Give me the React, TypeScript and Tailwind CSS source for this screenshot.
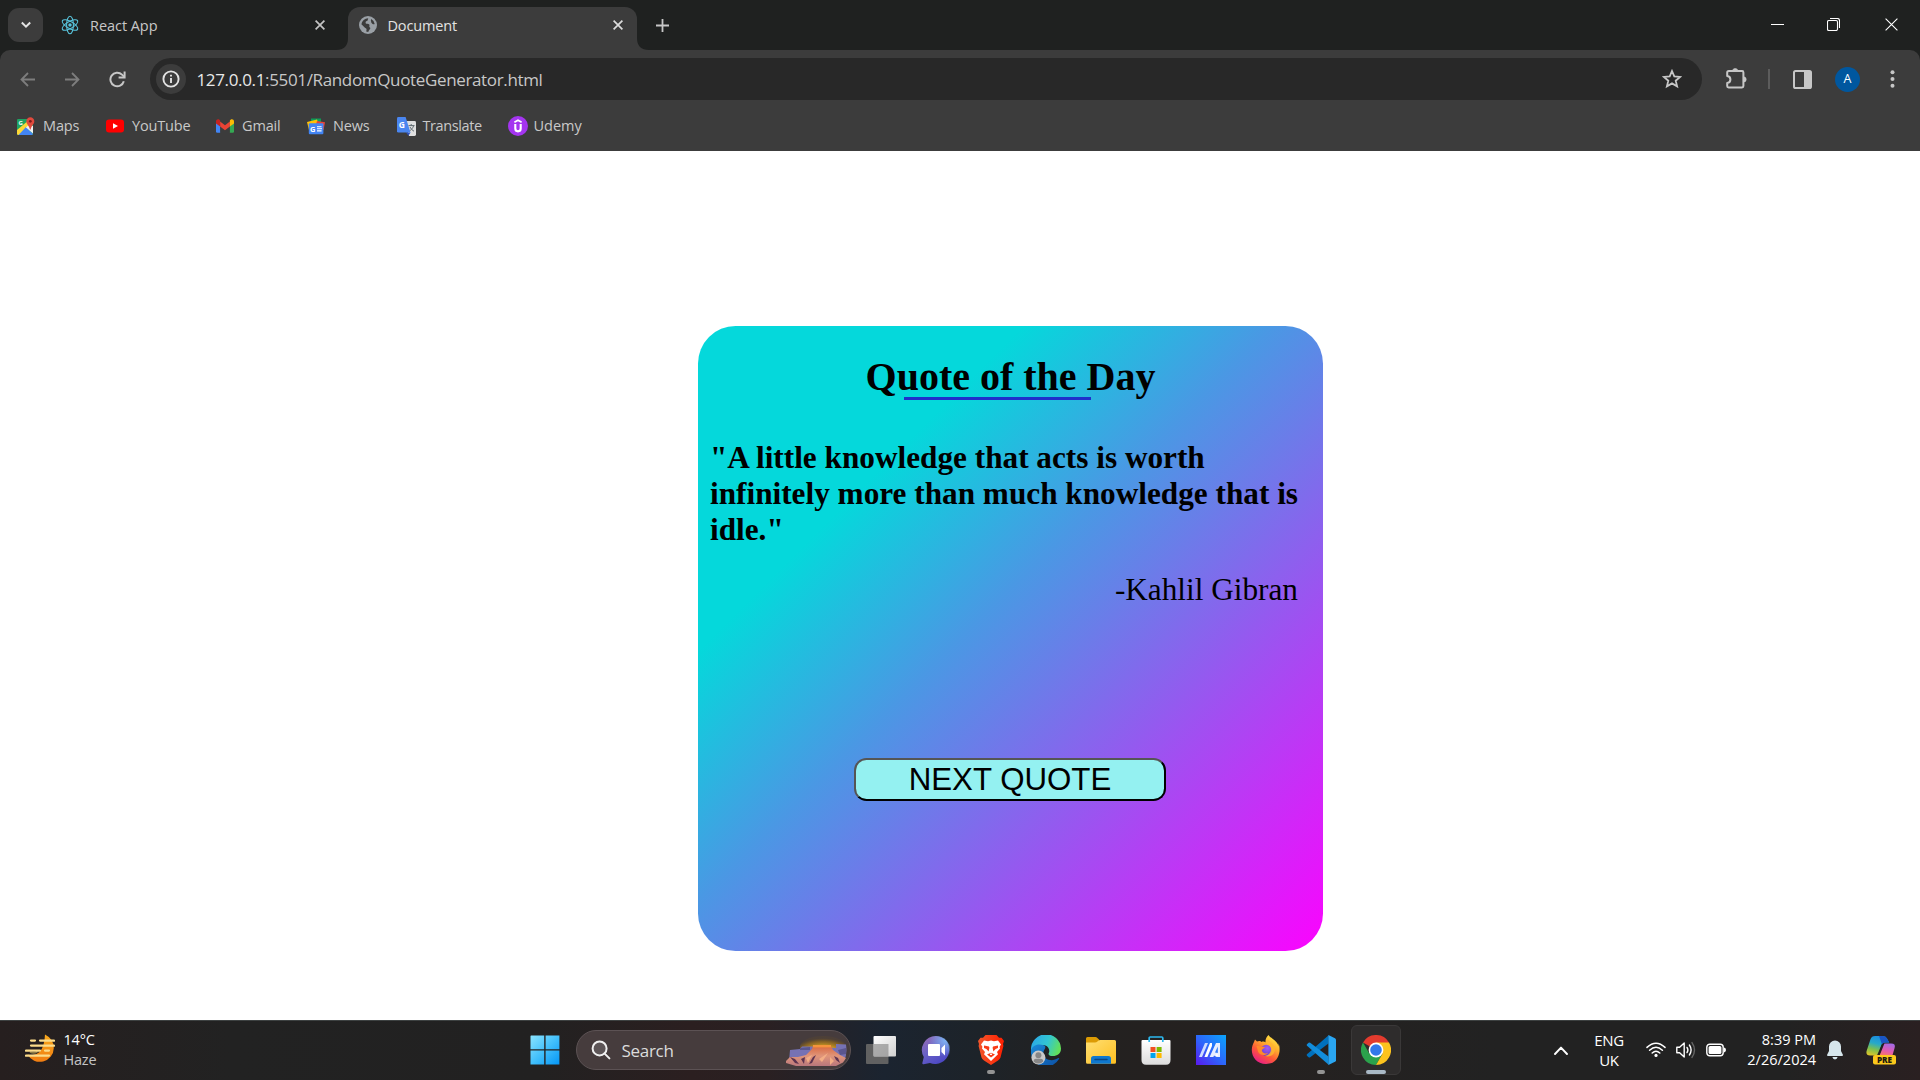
import type { ReactNode } from "react";

/* ---------- browser icons ---------- */

const ReactLogo = () => (
  <svg width="20" height="20" viewBox="-12 -12 24 24" fill="none" stroke="#58c4dc" strokeWidth="1.3">
    <circle r="2.1" fill="#58c4dc" stroke="none" />
    <ellipse rx="10.5" ry="4.1" transform="rotate(30)" />
    <ellipse rx="10.5" ry="4.1" transform="rotate(90)" />
    <ellipse rx="10.5" ry="4.1" transform="rotate(150)" />
  </svg>
);

const Globe = () => (
  <svg width="18" height="18" viewBox="0 0 18 18">
    <circle cx="9" cy="9" r="9" fill="#9aa0a6" />
    <path d="M9.3 2.2 C8.3 3.2 9.6 4.2 8.2 4.8 C6.6 5.3 6.5 6.2 6.7 7.2 C7 8.2 9.6 7.4 10.3 8.6 C10.9 9.8 9.8 10.4 10.6 11.2 C11.6 11.6 11.6 12.6 10.6 13.4 C9.8 14.2 9.6 15.2 9.2 15.9 A6.9 6.9 0 0 1 7.2 15.6 L7.6 13.6 C7.8 12.4 6 12.2 5.2 11 L2.4 8.3 A6.8 6.8 0 0 1 9.3 2.2 Z M12.2 3 A6.9 6.9 0 0 1 15.7 8 C14.6 8.6 13.4 8 12.6 7 C11.8 6 12.4 5.4 11.8 4.6 Z" fill="#3c3c3c" />
  </svg>
);

const Cross = ({ size, width = 1.7, color = "#dcdcdc" }: { size: number; width?: number; color?: string }) => (
  <svg width={size} height={size} viewBox={`0 0 ${size} ${size}`} stroke={color} strokeWidth={width}>
    <path d={`M.6 .6 L${size - 0.6} ${size - 0.6} M${size - 0.6} .6 L.6 ${size - 0.6}`} />
  </svg>
);

const MapsIcon = () => (
  <svg width="18" height="18" viewBox="0 0 18 18">
    <rect x="0" y="2" width="16" height="16" rx="1.5" fill="#1fa463" />
    <path d="M0 13 L0 16.5 Q0 18 1.5 18 L3 18 L14 7 L12 3 Z" fill="#fdd835" />
    <path d="M1.5 18 L9 10 L16 17 L15 18 Z" fill="#4285f4" />
    <path d="M9 10.5 L12 7.5 L16 9 L16 16.5 Z" fill="#f1f1f1" />
    <path d="M0 12 V3.5 Q0 2 1.5 2 H11 Z" fill="#1fa463" />
    <text x="1.4" y="8" fontSize="6" fontWeight="700" fill="#fff" fontFamily="Open Sans, sans-serif">G</text>
    <path d="M13.3 .3 A4 4 0 0 1 17.3 4.4 C17.3 7 14.4 8.3 13.6 12.5 H13 C12.2 8.3 9.3 7 9.3 4.4 A4 4 0 0 1 13.3 .3 Z" fill="#e14a3d" />
    <circle cx="13.3" cy="4.3" r="1.4" fill="#7d1d1b" />
  </svg>
);

const YouTubeIcon = () => (
  <svg width="18" height="18" viewBox="0 0 18 18">
    <rect x="0" y="2.6" width="18" height="12.8" rx="3" fill="#f00" />
    <path d="M7 6.2 L12 9 L7 11.8 Z" fill="#fff" />
  </svg>
);

const GmailIcon = () => (
  <svg width="18" height="18" viewBox="0 0 18 18">
    <path d="M0 5 V14.6 Q0 15.8 1.2 15.8 H4.1 V8.6 Z" fill="#4285f4" />
    <path d="M18 5 V14.6 Q18 15.8 16.8 15.8 H13.9 V8.6 Z" fill="#34a853" />
    <path d="M4.1 4.6 L9 8.3 L13.9 4.6 V9.6 L9 13.3 L4.1 9.6 Z" fill="#ea4335" />
    <path d="M0 4.4 C0 2.4 2.1 1.8 3.4 2.8 L4.1 3.3 V9.6 L0 6.5 Z" fill="#c5221f" />
    <path d="M18 4.4 C18 2.4 15.9 1.8 14.6 2.8 L13.9 3.3 V9.6 L18 6.5 Z" fill="#fbbc04" />
  </svg>
);

const NewsIcon = () => (
  <svg width="18" height="18" viewBox="0 0 18 18">
    <path d="M4 1.5 H14 V8 H4 Z" fill="#0c9d58" />
    <path d="M0 5 L10 2.4 L12.5 9 L2 13 Z" fill="#ffc107" />
    <path d="M10 4 L18 5.2 L16.6 13 L8 11 Z" fill="#ea4335" />
    <rect x="1.8" y="6.2" width="14.6" height="11" rx="1" fill="#4285f4" />
    <text x="3" y="14.6" fontSize="7.5" fontWeight="700" fill="#fff" fontFamily="Open Sans, sans-serif">G</text>
    <path d="M10 9.7 H14.6 M10 11.8 H15 M10 13.9 H14.6" stroke="#fff" strokeWidth="1.1" />
  </svg>
);

const TranslateIcon = () => (
  <svg width="19" height="19" viewBox="0 0 19 19">
    <path d="M8 4 H17.6 Q19 4 19 5.4 V17.6 Q19 19 17.6 19 H12 Z" fill="#dfdfdf" />
    <path d="M11.5 8.6 H17.5 M14.2 7 V8.6 M16.6 8.8 C16 11 14 13 12.4 14 M13 10 C14 12 15.6 13.4 17 14.2" stroke="#5f6a70" strokeWidth="1" fill="none" />
    <path d="M9 15.5 H13.5 L11.5 18.8 Z" fill="#3050b8" />
    <path d="M1.4 0 H8.6 L13.5 15.6 H1.4 Q0 15.6 0 14.2 V1.4 Q0 0 1.4 0 Z" fill="#4a86f0" />
    <text x="1.8" y="10.6" fontSize="8.5" fontWeight="700" fill="#fff" fontFamily="Open Sans, sans-serif">G</text>
  </svg>
);

const UdemyIcon = () => (
  <svg width="20" height="20" viewBox="0 0 20 20" fill="none" stroke="#fff">
    <circle cx="10" cy="10" r="10" fill="#a435f0" stroke="none" />
    <path d="M6.4 6.2 L10 4.2 L13.6 6.2" strokeWidth="1.7" />
    <path d="M7.3 8 V12.6 Q7.3 15.4 10 15.4 Q12.7 15.4 12.7 12.6 V8" strokeWidth="2.1" />
  </svg>
);

/* ---------- taskbar icons ---------- */

const Haze = () => (
  <svg width="30" height="30" viewBox="0 0 30 30">
    <defs>
      <linearGradient id="hz" x1="0" y1="0" x2="0" y2="1">
        <stop offset="0" stopColor="#f8a91c" />
        <stop offset="1" stopColor="#f07d12" />
      </linearGradient>
    </defs>
    <path d="M20 .5 Q28.8 5 28.8 14 A14 14 0 0 1 2.5 20.5 Q9 23 14.5 18 Q19.5 13 20 .5 Z" fill="url(#hz)" />
    <path d="M5 18 Q9 20 12.5 17.5" stroke="#8d7b45" strokeWidth="1.6" fill="none" />
    <g stroke="#fbdc8b" strokeWidth="2.2" strokeLinecap="round">
      <path d="M6 6.6 H10 M15 6.6 H29" />
      <path d="M6 11.6 H29" />
      <path d="M1 16.6 H15 M20 16.6 H24" />
      <path d="M1 21.6 H24" />
    </g>
  </svg>
);

const Windows = () => (
  <svg width="30" height="30" viewBox="0 0 30 30">
    <defs>
      <linearGradient id="wn" x1="0" y1="0" x2="1" y2="1">
        <stop offset="0" stopColor="#8be4ff" />
        <stop offset=".5" stopColor="#43c0fb" />
        <stop offset="1" stopColor="#0596f5" />
      </linearGradient>
    </defs>
    <path d="M1 .6 H14.2 V14.2 H.5 V1 Z M15.6 .5 H29.4 V14.2 H15.6 Z M.5 15.6 H14.2 V29.4 H.5 Z M15.6 15.6 H29.4 V29.4 H15.6 Z" fill="url(#wn)" />
  </svg>
);

const Canyon = () => (
  <svg width="61" height="32" viewBox="0 0 61 32">
    <defs>
      <radialGradient id="sun" cx=".5" cy=".75" r=".65">
        <stop offset="0" stopColor="#ffd34d" />
        <stop offset=".45" stopColor="#d09a20" />
        <stop offset=".8" stopColor="#8a6420" stopOpacity=".8" />
        <stop offset="1" stopColor="#6b5020" stopOpacity=".2" />
      </radialGradient>
      <linearGradient id="rk" x1="0" y1="0" x2="0" y2="1">
        <stop offset="0" stopColor="#d9693f" />
        <stop offset=".5" stopColor="#e0957a" />
        <stop offset="1" stopColor="#b9777c" />
      </linearGradient>
    </defs>
    <ellipse cx="37" cy="12" rx="23" ry="11" fill="url(#sun)" />
    <path d="M3 26 L4 15 L14 14 L16 11.5 H26 L30 12 L50 13 V9 L60 9.5 Q61.5 20 58 26 Z" fill="#7672b4" />
    <path d="M14 13 L24 12 V15 H14 Z M52 15 L60 13 V19 L54 20 Z" fill="#5a568f" />
    <path d="M0 26 L4 22 L12 22 L20 20 L26 14 L27 11 H45 L47 15 L54 20 L60 23 L57 27.5 L50 31 H10 L0 28 Z" fill="url(#rk)" />
    <path d="M27 10 H45 V12.4 H27 Z" fill="#f5943c" />
    <path d="M4 22 L9 24 L13 29 L9 28 Z M15 24 L19 22 L18 29 Z M27 22 L30 20 L26 28 L23 29 Z M48 21 L52 23 L54 28 L50 25 Z" fill="#5d3350" />
    <path d="M20 23 L26 20 L22 28 Z M33 24 L42 18 L36 27 Z M44 22 L48 26 L44 30 Z" fill="#f3ad85" />
  </svg>
);

const TaskView = () => (
  <svg width="30" height="30" viewBox="0 0 30 30">
    <defs>
      <linearGradient id="tv" x1="0" y1="0" x2="1" y2="1">
        <stop offset="0" stopColor="#fff" />
        <stop offset="1" stopColor="#cfcfcf" />
      </linearGradient>
    </defs>
    <rect x="0" y="9" width="22.5" height="20" rx="1" fill="#616161" />
    <rect x="7.5" y="1" width="22.5" height="20.5" rx="1" fill="url(#tv)" />
    <path d="M7.5 9 H22.5 V21.5 H7.5 Z" fill="#8e8e8e" fillOpacity=".7" />
  </svg>
);

const Chat = () => (
  <svg width="30" height="30" viewBox="0 0 30 30">
    <defs>
      <linearGradient id="ch" x1="0" y1="0" x2=".6" y2="1">
        <stop offset="0" stopColor="#9a6bb0" />
        <stop offset=".5" stopColor="#6c63c6" />
        <stop offset="1" stopColor="#4c48c4" />
      </linearGradient>
      <radialGradient id="ch2" cx=".85" cy=".15" r=".6">
        <stop offset="0" stopColor="#7fb4f4" />
        <stop offset="1" stopColor="#7fb4f4" stopOpacity="0" />
      </radialGradient>
    </defs>
    <path d="M15 1 A14 14 0 1 1 9 28 L2.6 29.2 Q1 29.4 1.4 27.8 L2.8 22 A14 14 0 0 1 15 1 Z" fill="url(#ch)" />
    <circle cx="15" cy="15" r="14" fill="url(#ch2)" />
    <rect x="7" y="9" width="12" height="12" rx="1" fill="#fff" />
    <path d="M20.5 13 L24 9.6 V20.4 L20.5 17 Z" fill="#fff" />
  </svg>
);

const Brave = () => (
  <svg width="30" height="30" viewBox="0 0 30 30">
    <defs>
      <linearGradient id="br" x1="0" y1="0" x2="1" y2="0">
        <stop offset="0" stopColor="#f1562b" />
        <stop offset="1" stopColor="#ff1f00" />
      </linearGradient>
    </defs>
    <path d="M9.5 0 H20.5 L23 2.8 L25.5 2.8 L28 6 L27 9 L27.4 11 L24.5 22.5 Q24 24 22 25.4 L15 30 L8 25.4 Q6 24 5.5 22.5 L2.6 11 L3 9 L2 6 L4.5 2.8 L7 2.8 Z" fill="url(#br)" />
    <path d="M8 5.4 L12 6.2 L15 5.4 L18 6.2 L22 5.4 L25 9.6 L23.6 11.8 L24 13.4 L21 17 L22 19.2 L15 26 L8 19.2 L9 17 L6 13.4 L6.4 11.8 L5 9.6 Z" fill="#fff" />
    <path d="M8 10.6 L13 11.4 L13.4 12.8 L12.6 16.6 L10.4 14 L8 13 Z M22 10.6 L17 11.4 L16.6 12.8 L17.4 16.6 L19.6 14 L22 13 Z M11 19.6 L15 17.8 L19 19.6 L15 22.4 Z" fill="#f83c18" />
    <path d="M14 18 L15 19.2 L16 18 V20 H14 Z" fill="#fff" />
  </svg>
);

const Edge = () => (
  <svg width="30" height="30" viewBox="0 0 30 30">
    <defs>
      <linearGradient id="e1" x1="0" y1=".2" x2="1" y2=".5">
        <stop offset="0" stopColor="#2aa5e8" />
        <stop offset=".55" stopColor="#32c6d2" />
        <stop offset="1" stopColor="#62e05a" />
      </linearGradient>
      <linearGradient id="e2" x1="0" y1="0" x2="1" y2="1">
        <stop offset="0" stopColor="#1a8ad8" />
        <stop offset="1" stopColor="#0c4fa3" />
      </linearGradient>
    </defs>
    <path d="M0 15 A15 15 0 0 1 30 13.5 C30 19 26 21 22 21 C18 21 17 19.4 17.8 18 C19.4 14.8 17 10 11.5 10 C5 10 1 13 0 17 Z" fill="url(#e1)" />
    <path d="M0 15 C2 9.5 8 8.6 12 10 C17 12 12.5 14 12.2 18 C12 23 17 25.4 21 25.2 C24 25 26 23.6 27.6 23 Q28.6 22.6 28 24 A15 15 0 0 1 0 15 Z" fill="url(#e2)" />
    <circle cx="7.4" cy="22.6" r="7" fill="#c9c9c9" />
    <circle cx="7.4" cy="20.2" r="3" fill="#868686" />
    <path d="M2.6 26.4 Q2.6 23.8 5 23.8 H9.8 Q12.2 23.8 12.2 26.4 Q10 28.6 7.4 28.6 Q4.8 28.6 2.6 26.4 Z" fill="#868686" />
  </svg>
);

const Folder = () => (
  <svg width="30" height="30" viewBox="0 0 30 30">
    <defs>
      <linearGradient id="fd" x1="0" y1="0" x2="1" y2="1">
        <stop offset="0" stopColor="#ffdf73" />
        <stop offset="1" stopColor="#fdbf20" />
      </linearGradient>
    </defs>
    <path d="M0 3.5 Q0 2 1.5 2 H9.5 Q10.5 2 11.4 3 L13.5 5 V9 H0 Z" fill="#dc9b04" />
    <path d="M0 7.5 H9 Q10.4 7.5 11.4 6.5 L12.6 5.6 Q13.2 5 14.2 5 H28.5 Q30 5 30 6.5 V27.2 Q30 28.8 28.5 28.8 H1.5 Q0 28.8 0 27.2 Z" fill="url(#fd)" />
    <path d="M5 28.8 V23.6 Q5 21 7.6 21 H22.4 Q25 21 25 23.6 V28.8 Z" fill="#0f78cf" />
    <path d="M9 24.5 H21" stroke="#0a4684" strokeWidth="1.5" strokeLinecap="round" />
  </svg>
);

const Store = () => (
  <svg width="30" height="30" viewBox="0 0 30 30">
    <defs>
      <linearGradient id="st" x1="0" y1="0" x2="0" y2="1">
        <stop offset="0" stopColor="#fff" />
        <stop offset="1" stopColor="#dcdcdc" />
      </linearGradient>
    </defs>
    <path d="M8.2 7 V3 Q8.2 2 9.2 2 H20.8 Q21.8 2 21.8 3 V7" fill="none" stroke="#2bb8ee" strokeWidth="1.7" />
    <path d="M.5 6 Q.5 5 1.5 5 H28.5 Q29.5 5 29.5 6 V25 Q29.5 29.8 25 29.8 H5 Q.5 29.8 .5 25 Z" fill="url(#st)" />
    <path d="M8.2 5 V7 M21.8 5 V7" stroke="#2bb8ee" strokeWidth="1.7" />
    <rect x="9.5" y="12" width="5" height="5" fill="#f25022" />
    <rect x="15.6" y="12" width="5" height="5" fill="#7fba00" />
    <rect x="9.5" y="18" width="5" height="5" fill="#00a4ef" />
    <rect x="15.6" y="18" width="5" height="5" fill="#ffb900" />
  </svg>
);

const Asus = () => (
  <svg width="30" height="30" viewBox="0 0 30 30">
    <defs>
      <linearGradient id="as" x1="0" y1="1" x2="1" y2="0">
        <stop offset="0" stopColor="#5a18ee" />
        <stop offset=".45" stopColor="#2f62fb" />
        <stop offset="1" stopColor="#0aa5fb" />
      </linearGradient>
    </defs>
    <rect width="30" height="30" fill="url(#as)" />
    <path d="M3 22 L9 8 H12 L6 22 Z" fill="#cfdcff" />
    <path d="M8.4 22 L14 8 H16 V11 L11.4 22 Z" fill="#fff" />
    <path d="M13.6 22 L20 8 H24 V22 H20.6 L18 20.6 L17.4 22 Z" fill="#e6eeff" />
    <path d="M21.8 11.6 V18 L19 17.6 Z" fill="#2f7bfa" />
    <circle cx="20.9" cy="20.2" r="1" fill="#fff" />
  </svg>
);

const Firefox = () => (
  <svg width="30" height="30" viewBox="0 0 30 30">
    <defs>
      <linearGradient id="ff" x1=".85" y1="0" x2=".25" y2="1">
        <stop offset="0" stopColor="#fff04a" />
        <stop offset=".35" stopColor="#ffb02e" />
        <stop offset=".65" stopColor="#ff5a36" />
        <stop offset="1" stopColor="#e5198c" />
      </linearGradient>
      <radialGradient id="fp" cx=".6" cy=".3" r=".8">
        <stop offset="0" stopColor="#a45cf5" />
        <stop offset="1" stopColor="#5b3cc9" />
      </radialGradient>
    </defs>
    <path d="M17.5 0 C19 3 26 5 27.6 11.4 C27.4 10 27.8 9 27.4 8 C30 13 29.5 29 15 29 C6 29 .8 22 .8 15 C.8 11 2.4 8.6 3 7 L4 4.4 L6 6.6 C8 5.6 9.8 6 10.6 7 C12 6 13.6 7 14.6 7.4 C14 5 15.6 1.6 17.5 0 Z" fill="url(#ff)" />
    <circle cx="15.2" cy="15.4" r="5.6" fill="url(#fp)" />
    <path d="M5.5 11 C8 10 9 12 14 12 C13.4 13.6 11.6 13.6 10.8 15 C11 18 14 19 17 18 C14.6 21 9 20.6 7.2 17 Z" fill="#ff8a2a" />
    <path d="M14.6 7.4 C18.4 9 20.4 11.6 20 15 C19.6 18.6 16.6 20.8 14 20.6 C18 23 24 20 24 14 C24 10 20 8 17 4.6 Z" fill="#ffb52e" fillOpacity=".85" />
  </svg>
);

const VSCode = () => (
  <svg width="30" height="30" viewBox="0 0 30 30">
    <path d="M22.6 .2 L1 19.2 Q.2 20 1 20.8 L2.6 22.2 Q3.4 22.8 4.2 22.2 L22.4 8.4 Z" fill="#0071bd" />
    <path d="M22.6 29.8 L1 10.8 Q.2 10 1 9.2 L2.6 7.8 Q3.4 7.2 4.2 7.8 L22.4 21.6 Z" fill="#128ddb" />
    <path d="M22.4 0 L29 3.2 Q30 3.7 30 4.8 V25.2 Q30 26.3 29 26.8 L22.4 30 Z" fill="#2aa6f2" />
  </svg>
);

const Chrome = () => (
  <svg width="30" height="30" viewBox="0 0 30 30">
    <path d="M15 15 L2 7.5 A15 15 0 0 1 28 7.5 Z" fill="#e33b2e" />
    <path d="M2 7.5 L8.5 18.7 L21.5 18.7 L15 30 A15 15 0 0 1 2 7.5 Z" fill="#2ba24c" />
    <path d="M15 7.5 H28 A15 15 0 0 1 15 30 L21.5 18.7 Z" fill="#fcc31e" />
    <circle cx="15" cy="15" r="7.4" fill="#fff" />
    <circle cx="15" cy="15" r="5.8" fill="#3278ea" />
  </svg>
);

const Copilot = () => (
  <svg width="30" height="30" viewBox="0 0 30 30">
    <defs>
      <linearGradient id="c1" x1=".6" y1="0" x2=".3" y2="1">
        <stop offset="0" stopColor="#1a8be0" />
        <stop offset=".4" stopColor="#27a9c9" />
        <stop offset=".7" stopColor="#7dc04f" />
        <stop offset="1" stopColor="#d9c52b" />
      </linearGradient>
      <linearGradient id="c2" x1=".8" y1="0" x2=".4" y2="1">
        <stop offset="0" stopColor="#a06be8" />
        <stop offset=".6" stopColor="#e25bb0" />
        <stop offset="1" stopColor="#f5756b" />
      </linearGradient>
    </defs>
    <path d="M9 1 H17 Q20 1 21 3.6 L23.2 7.6 H19 Q16.4 7.6 15.6 9.8 L12.6 19 Q12 20.6 10 20.6 H4 Q-.4 20.6 .6 16 L4.4 4.4 Q5.6 1 9 1 Z" fill="url(#c1)" />
    <path d="M13 1 H17 Q20 1 21 3.6 L23.2 7.6 H19.4 Q17 7.6 16 9.4 Z" fill="#1a55c4" />
    <path d="M19 8.6 H25 Q30 8.6 28.6 13 L26.4 20.6 H11 Q13.4 20.4 14.4 17.6 L16.4 10.8 Q17 8.6 19 8.6 Z" fill="url(#c2)" />
    <path d="M18.4 8.6 L13.6 20.6 H11 L15.6 9.8 Q16.6 8.4 18.4 8.6 Z" fill="#222" />
    <rect x="7" y="20" width="23" height="9.6" rx="2" fill="#fcc81c" />
    <text x="18.5" y="27.7" fontSize="8.2" fontWeight="800" textAnchor="middle" fill="#1c1a10" fontFamily="Open Sans, sans-serif">PRE</text>
  </svg>
);

/* ---------- pieces ---------- */

const Bookmark = ({ icon, label, className }: { icon: ReactNode; label: string; className: string }) => (
  <div className={`flex items-center text-[14.5px] leading-5 text-[#c9c9c9] ${className}`}>
    <span className="flex w-[26px] shrink-0 items-center">{icon}</span>
    <span className="whitespace-nowrap">{label}</span>
  </div>
);

const TaskItem = ({ children, state }: { children: ReactNode; state?: "open" | "active" }) => (
  <div className="flex h-[50px] w-[55px] justify-center">
    <div
      className={
        state === "active"
          ? "relative flex h-[50px] w-[50px] items-center justify-center rounded-md border border-[#3a3838] bg-[#2e2c2c] pb-px"
          : "relative flex h-[50px] w-[50px] items-center justify-center pb-px"
      }
    >
      {children}
      {state === "open" && <span className="absolute bottom-[1px] left-[21px] h-1 w-2 rounded-full bg-[#939393]" />}
      {state === "active" && <span className="absolute bottom-0 left-[14px] h-1 w-5 rounded-full bg-[#a9b9c6]" />}
    </div>
  </div>
);

const TabStrip = () => (
  <div className="flex h-[50px] items-start bg-[#1f2120]">
    <div className="ml-2 mt-2 flex h-[34px] w-[35px] items-center justify-center rounded-[11px] bg-[#3c3c3c]">
      <svg width="10" height="8" viewBox="0 0 10 8" fill="none" stroke="#e3e3e3" strokeWidth="2">
        <path d="M.8 1.5 L5 5.7 L9.2 1.5" />
      </svg>
    </div>
    <div className="mt-[7px] flex h-9 w-[305px] items-center pl-[17px]">
      <ReactLogo />
      <span className="ml-[10px] w-[225px] pt-px text-[14.5px] leading-5 tracking-[-0.05px] text-[#c7c7c7]">React App</span>
      <Cross size={10} color="#c4c4c4" />
    </div>
    <div className="relative mt-[7px] flex h-[43px] w-[289px] items-start rounded-t-[12px] bg-[#3c3c3c]">
      <svg className="absolute bottom-0 -left-3" width="12" height="12" viewBox="0 0 12 12">
        <path d="M12 0 V12 H0 Q12 12 12 0 Z" fill="#3c3c3c" />
      </svg>
      <svg className="absolute bottom-0 -right-3" width="12" height="12" viewBox="0 0 12 12">
        <path d="M0 0 V12 H12 Q0 12 0 0 Z" fill="#3c3c3c" />
      </svg>
      <div className="flex h-9 items-center pl-[11px]">
        <Globe />
        <span className="ml-[10.5px] w-[225px] pt-px text-[14.5px] leading-5 tracking-[-0.15px] text-[#e3e3e3]">Document</span>
        <Cross size={10} />
      </div>
    </div>
    <div className="flex h-[50px] flex-1 items-center pl-[19px]">
      <svg width="13" height="13" viewBox="0 0 13 13" stroke="#c7c7c7" strokeWidth="1.8">
        <path d="M6.5 0 V13 M0 6.5 H13" />
      </svg>
    </div>
    <div className="flex h-[49px] items-center pr-[22px]">
      <svg width="13" height="13" viewBox="0 0 13 13" stroke="#fff">
        <path d="M0 6.5 H13" />
      </svg>
      <svg className="ml-[43px]" width="13" height="13" viewBox="0 0 13 13" fill="none" stroke="#fff" strokeWidth="1.1">
        <rect x=".5" y="2.5" width="10" height="10" rx="1.4" />
        <path d="M3 .5 H10.4 Q12.5 .5 12.5 2.6 V10" />
      </svg>
      <span className="ml-[45px]">
        <Cross size={13} width={1.1} color="#fff" />
      </span>
    </div>
  </div>
);

const Toolbar = () => (
  <div className="bg-[#1f2120]">
    <div className="h-[101px] rounded-t-[10px] bg-[#3c3c3c] pt-2">
      <div className="flex h-[42px] items-center">
        <svg className="ml-5" width="15" height="15" viewBox="0 0 15 15" fill="none" stroke="#7d7d7d" strokeWidth="1.8">
          <path d="M15 7.5 H1.5 M8 1 L1.5 7.5 L8 14" />
        </svg>
        <svg className="ml-[30px]" width="15" height="15" viewBox="0 0 15 15" fill="none" stroke="#7d7d7d" strokeWidth="1.8">
          <path d="M0 7.5 H13.5 M7 1 L13.5 7.5 L7 14" />
        </svg>
        <svg className="ml-[29px]" width="17" height="17" viewBox="0 0 17 17" fill="none" stroke="#c7c7c7" strokeWidth="2">
          <path d="M14.8 10.2 A6.8 6.8 0 1 1 13 3.6 L15 5.6" />
          <path d="M15.6 .6 V6.4 H9.6" />
        </svg>
        <div className="ml-[24px] flex h-[42px] w-[1552px] items-center rounded-full bg-[#282828] pl-[6px]">
          <span className="flex h-[30px] w-[30px] items-center justify-center rounded-full bg-[#3c3c3c]">
            <svg width="18" height="18" viewBox="0 0 18 18" fill="none" stroke="#e3e3e3" strokeWidth="1.9">
              <circle cx="9" cy="9" r="7.6" />
              <path d="M9 8 V13 M9 4.8 V6.6" />
            </svg>
          </span>
          <span className="ml-[10.5px] flex-1 whitespace-nowrap pt-px text-[17px] leading-6 tracking-[-0.35px] text-[#c7c7c7]">
            <span className="text-[#e8e8e8]">127.0.0.1</span>:5501/RandomQuoteGenerator.html
          </span>
          <svg className="mr-[20px]" width="20" height="20" viewBox="0 0 20 20" fill="none" stroke="#c7c7c7" strokeWidth="1.8">
            <path d="M10 2 L12.3 7.4 L18.2 7.9 L13.7 11.7 L15.1 17.4 L10 14.4 L4.9 17.4 L6.3 11.7 L1.8 7.9 L7.7 7.4 Z" />
          </svg>
        </div>
        <svg className="ml-[24px] mb-px" width="21" height="21" viewBox="0 0 21 21">
          <path d="M1.2 4.6 Q1.2 3 2.8 3 H16.2 Q17.4 3 17.4 4.4 V18 Q17.4 19.4 16 19.4 H2.6 Q1.2 19.4 1.2 18 V15 Q4.4 14.6 4.4 11.4 Q4.4 8.4 1.2 8 Z" fill="none" stroke="#c7c7c7" strokeWidth="2" strokeLinejoin="round" />
          <path d="M6.6 3 A2.6 2.6 0 0 1 11.8 3 Z M17.6 8.8 A2.6 2.6 0 0 1 17.6 14 Z" fill="#c7c7c7" stroke="#c7c7c7" strokeWidth=".6" />
        </svg>
        <span className="ml-[21px] h-5 w-[2px] bg-[#5c5c5c]" />
        <svg className="ml-[23px]" width="19" height="19" viewBox="0 0 19 19">
          <rect x="1" y="1" width="17" height="17" rx="1.6" fill="none" stroke="#c7c7c7" strokeWidth="2" />
          <path d="M11 1 H18 V18 H11 Z" fill="#c7c7c7" />
        </svg>
        <span className="ml-[23px] flex h-[25px] w-[25px] items-center justify-center rounded-full bg-[#00579f] text-[12.5px] leading-none text-white">A</span>
        <svg className="ml-[30px]" width="5" height="18" viewBox="0 0 5 18" fill="#c7c7c7">
          <circle cx="2.5" cy="2.2" r="2" />
          <circle cx="2.5" cy="9" r="2" />
          <circle cx="2.5" cy="15.8" r="2" />
        </svg>
      </div>
      <div className="mt-[15px] flex h-[22px] items-center pl-[17px] tracking-[-0.15px]">
        <Bookmark icon={<MapsIcon />} label="Maps" className="w-[89px]" />
        <Bookmark icon={<YouTubeIcon />} label="YouTube" className="w-[110px]" />
        <Bookmark icon={<GmailIcon />} label="Gmail" className="w-[91px]" />
        <Bookmark icon={<NewsIcon />} label="News" className="w-[89.5px]" />
        <Bookmark icon={<TranslateIcon />} label="Translate" className="w-[111px] tracking-[-0.4px]" />
        <Bookmark icon={<UdemyIcon />} label="Udemy" className="tracking-normal" />
      </div>
    </div>
  </div>
);

const QuotePage = () => (
  <main className="flex h-[869px] justify-center bg-white pl-[101px] pt-[175px]">
    <section className="h-[625px] w-[625px] rounded-[37.5px] bg-[linear-gradient(135deg,#05d8db_26%,#4a98e4_46%,#ff00ff_101%)] font-['Liberation_Serif',serif] text-black">
      <div className="h-[74px] pt-[28px]">
        <h1 className="text-center text-[40px] leading-[46px] font-bold">Quote of the Day</h1>
        <div className="relative -top-[3px] ml-[206px] h-[3px] w-[187px] bg-[#1f2fcb]" />
      </div>
      <p className="mt-[40px] pl-[12px] pr-[20px] text-[31.25px] leading-[36px] font-bold">
        "A little knowledge that acts is worth infinitely more than much knowledge that is idle."
      </p>
      <p className="mt-[24px] pr-[25px] text-right text-[31.25px] leading-[36px]">-Kahlil Gibran</p>
      <button className="ml-[156px] mt-[150px] flex h-[43px] w-[312px] items-center justify-center rounded-[12.5px] border-2 border-t-[#555] border-r-black border-b-black border-l-[#555] bg-[#94f1f1] font-['Liberation_Sans',sans-serif] text-[31.25px] leading-[36px]">
        NEXT QUOTE
      </button>
    </section>
  </main>
);

const Taskbar = () => (
  <footer className="flex h-[60px] border-t border-[#3d4141] bg-[linear-gradient(90deg,#261f1f_0%,#222222_12%,#222121_28%,#2b1f20_36%,#2a2022_40%,#1b2430_46%,#1d2329_51%,#232120_56%,#252120_64%,#222222_78%,#222222_93%,#2a2021_100%)]">
    <div className="flex w-[517px] pl-[25px] pt-[13px]">
      <Haze />
      <div className="-mt-[4px] ml-[8.5px] text-[14.5px] leading-5 tracking-[-0.2px]">
        <div className="text-white">14°C</div>
        <div className="text-[#c4c4c4]">Haze</div>
      </div>
    </div>
    <div className="flex h-[59px] pt-1">
      <TaskItem>
        <Windows />
      </TaskItem>
      <div className="ml-[4px] mt-[5px] mr-[2px] flex h-10 w-[275px] items-center rounded-full border border-[#5c5254] bg-[#463c3d] pl-[13.5px]">
        <svg width="20" height="20" viewBox="0 0 20 20" fill="none" stroke="#f0f0f0" strokeWidth="2">
          <circle cx="8.6" cy="8.4" r="7" fill="#5d5557" />
          <path d="M13.4 13.4 L18.4 18.4" strokeLinecap="round" />
        </svg>
        <span className="ml-[11px] flex-1 pt-px text-[17px] leading-6 tracking-[-0.3px] text-[#dcdcdc]">Search</span>
        <span className="mr-[3px] mt-[2px]">
          <Canyon />
        </span>
      </div>
      <TaskItem><TaskView /></TaskItem>
      <TaskItem><Chat /></TaskItem>
      <TaskItem state="open"><Brave /></TaskItem>
      <TaskItem><Edge /></TaskItem>
      <TaskItem><Folder /></TaskItem>
      <TaskItem><Store /></TaskItem>
      <TaskItem><Asus /></TaskItem>
      <TaskItem><Firefox /></TaskItem>
      <TaskItem state="open"><VSCode /></TaskItem>
      <TaskItem state="active"><Chrome /></TaskItem>
    </div>
    <div className="flex h-[58px] flex-1 items-center text-[15px] leading-5 text-white">
      <svg className="ml-[151px]" width="14" height="9" viewBox="0 0 14 9" fill="none" stroke="#fff" strokeWidth="1.9" strokeLinecap="round" strokeLinejoin="round">
        <path d="M1 8 L7 1.6 L13 8" />
      </svg>
      <div className="ml-[20px] w-[42px] pb-px text-center tracking-[-0.3px]">
        <div>ENG</div>
        <div>UK</div>
      </div>
      <svg className="ml-[16px]" width="20" height="16" viewBox="0 0 20 16" fill="none" stroke="#fff" strokeWidth="1.5" strokeLinecap="round">
        <path d="M1 5.4 Q10 -3 19 5.4 M3.6 8.2 Q10 2.2 16.4 8.2 M6.2 11 Q10 7.4 13.8 11" />
        <circle cx="10" cy="13.4" r="1.6" fill="#fff" stroke="none" />
      </svg>
      <svg className="ml-[10px]" width="20" height="18" viewBox="0 0 20 18" fill="none" stroke="#fff" strokeWidth="1.4" strokeLinejoin="round" strokeLinecap="round">
        <path d="M.8 6.2 H3.6 L8.2 2 V16 L3.6 11.8 H.8 Z M11 6.4 Q12.8 9 11 11.6 M13.4 4 Q16.8 9 13.4 14" />
        <path d="M16 1.6 Q21 9 16 16.4" stroke="#666" />
      </svg>
      <svg className="ml-[10px]" width="20" height="14" viewBox="0 0 20 14">
        <rect x=".8" y="1.2" width="16.4" height="11.6" rx="3" fill="none" stroke="#fff" strokeWidth="1.4" />
        <rect x="2.6" y="3" width="12.8" height="8" rx="1.6" fill="#fff" />
        <path d="M18 4.6 Q20 5 20 7 Q20 9 18 9.4 Z" fill="#fff" />
      </svg>
      <div className="w-[90px] whitespace-nowrap text-right text-[14.5px]">
        <div>8:39 PM</div>
        <div>2/26/2024</div>
      </div>
      <svg className="ml-[11px]" width="16" height="20" viewBox="0 0 16 20" fill="#d6e6ec">
        <path d="M8 .6 A6 6 0 0 1 14 6.6 V11 L16 15 Q16 16 15 16 H1 Q0 16 0 15 L2 11 V6.6 A6 6 0 0 1 8 .6 Z M5.4 17 H10.6 Q10.2 19.4 8 19.4 Q5.8 19.4 5.4 17 Z" />
      </svg>
      <span className="ml-[23px]">
        <Copilot />
      </span>
    </div>
  </footer>
);

export default function App() {
  return (
    <div className="flex h-[1080px] w-[1920px] flex-col overflow-hidden font-['Open_Sans',sans-serif]">
      <TabStrip />
      <Toolbar />
      <QuotePage />
      <Taskbar />
    </div>
  );
}
